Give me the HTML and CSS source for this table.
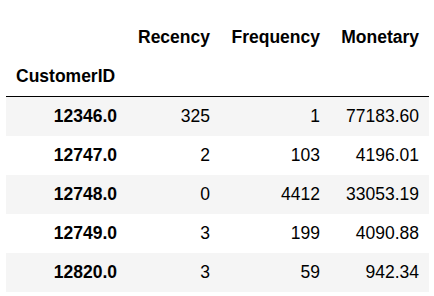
FILE: index.html
```html
<!DOCTYPE html>
<html>
<head>
<meta charset="utf-8">
<link rel="stylesheet" href="styles.css">
</head>
<body>
<div class="wrap">
<table class="df">
  <thead>
    <tr>
      <th class="c0"></th>
      <th class="c1">Recency</th>
      <th class="c2">Frequency</th>
      <th class="c3">Monetary</th>
    </tr>
    <tr class="last">
      <th class="c0 idxname">CustomerID</th>
      <th></th>
      <th></th>
      <th></th>
    </tr>
  </thead>
  <tbody>
    <tr class="odd"><th>12346.0</th><td>325</td><td>1</td><td>77183.60</td></tr>
    <tr><th>12747.0</th><td>2</td><td>103</td><td>4196.01</td></tr>
    <tr class="odd"><th>12748.0</th><td>0</td><td>4412</td><td>33053.19</td></tr>
    <tr><th>12749.0</th><td>3</td><td>199</td><td>4090.88</td></tr>
    <tr class="odd"><th>12820.0</th><td>3</td><td>59</td><td>942.34</td></tr>
  </tbody>
</table>
</div>
</body>
</html>
```
FILE: styles.css
```css
html, body {
  margin: 0;
  padding: 0;
  background: #ffffff;
}
.wrap {
  padding: 18px 0 0 6px;
}
.df {
  border-collapse: collapse;
  border-spacing: 0;
  font-family: "Liberation Sans", Arial, sans-serif;
  font-size: 17.5px;
  color: #000;
  table-layout: fixed;
}
.df th, .df td {
  padding: 9px 10px;
  line-height: 21px;
  text-align: right;
  white-space: nowrap;
  vertical-align: middle;
  box-sizing: border-box;
}
.df th {
  font-weight: bold;
}
.df .c0 { width: 121px; }
.df .c1 { width: 93px; }
.df .c2 { width: 110px; }
.df .c3 { width: 99px; }
.df .idxname {
  text-align: left;
}
.df thead tr.last th {
  border-bottom: 1px solid #000;
}
.df tbody tr.odd {
  background: #f5f5f5;
}
```
